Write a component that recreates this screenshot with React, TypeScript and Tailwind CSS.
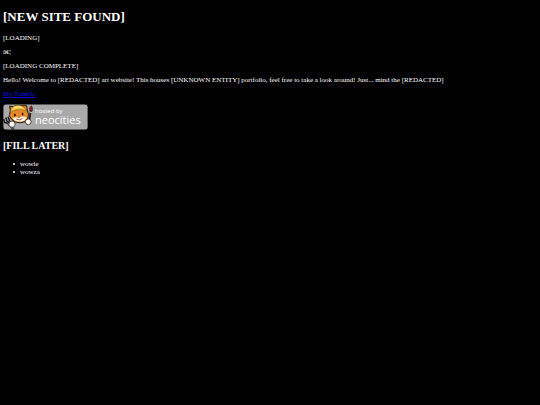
const log = ["[LOADING]", "â€¦", "[LOADING COMPLETE]"];
const items = ["wowie", "wowza"];

function NeocitiesBadge() {
  return (
    <svg viewBox="0 0 85 26" className="block h-[26px] w-[85px]" role="img" aria-label="hosted by neocities">
      <rect x="0.4" y="0.6" width="84.2" height="24.8" rx="2.5" fill="#a9a9a9" />
      {/* fork */}
      <path d="M4.6 18.6 L10.6 25.2" stroke="#1d1d1d" strokeWidth="2.4" />
      <path d="M0.6 15 L1.8 18.6 L4.8 19.2 L6.6 16.6 L5 12.6 M2.8 13.6 L4.8 19.2" stroke="#1d1d1d" strokeWidth="1.5" fill="none" />
      <path d="M4.6 18.6 L10.4 25" stroke="#8c8f94" strokeWidth="0.9" />
      {/* cat */}
      <path d="M7.4 6 L6.6 2.2 L10.4 2.6 Q15 0 19.6 1.6 L23.8 1.8 L24.2 6 L25.6 10.5 Q25.4 15.6 22 17.8 Q17 19.6 12.4 18 Q7.6 15.6 6.4 11.6Z" fill="#e8892b" stroke="#21160d" strokeWidth="1" />
      <path d="M7.4 8.6 Q7.6 2.2 14 1.2 Q20.6 0.8 23.6 7 Q18.6 4.8 13.6 5.8 Q10 6.6 7.4 8.6Z" fill="#f3c846" stroke="#6b4a12" strokeWidth="0.5" />
      <path d="M11 3.6 Q15 1.6 19 3.2" stroke="#fff0a6" strokeWidth="0.9" fill="none" />
      <path d="M9.6 14.4 Q11.6 12.8 15 13.4 Q19.4 11.6 23.8 13 Q22.6 17.4 17 17.8 Q12 17.6 9.6 14.4Z" fill="#fff3df" />
      <ellipse cx="11.8" cy="11" rx="0.9" ry="1.5" fill="#211210" />
      <ellipse cx="19.6" cy="10" rx="0.9" ry="1.5" fill="#211210" />
      <path d="M15 13 L16.8 12.8 L16 14Z" fill="#5a2018" />
      <path d="M13.4 15.2 Q16.6 17 19.4 14.4" stroke="#832f22" strokeWidth="0.8" fill="none" />
      {/* brush */}
      <path d="M27.8 6.8 L26.2 17" stroke="#2b1714" strokeWidth="1.8" />
      <path d="M26.8 6.8 Q26 3.6 28.4 1.8 Q30.2 4 29 7.2Z" fill="#a82328" stroke="#2b1010" strokeWidth="0.7" />
      <path d="M27 8.2 L29 8.4" stroke="#d8d8d8" strokeWidth="1" />
      <circle cx="9" cy="20.2" r="3.1" fill="#fff" stroke="#3b2616" strokeWidth="0.8" />
      <circle cx="25.2" cy="17.8" r="2.9" fill="#fff" stroke="#3b2616" strokeWidth="0.8" />
      <text x="32" y="9" fontSize="6" fill="#fff" fontFamily="'Open Sans', sans-serif">hosted by</text>
      <text x="32" y="20" fontSize="11" fontWeight="500" fill="#fff" fontFamily="'Open Sans', sans-serif">neocities</text>
    </svg>
  );
}

export default function App() {
  return (
    <div className="min-h-screen bg-black px-[3px] pt-[9px] pb-2 font-['Liberation_Serif',serif] text-[7px] leading-[8px] text-white">
      <h1 className="text-[13px] leading-4 font-bold">[NEW SITE FOUND]</h1>
      <div className="mt-[9px] flex flex-col items-start gap-[6px]">
        {log.map((line) => (
          <p key={line}>{line}</p>
        ))}
        <p>
          Hello! Welcome to [REDACTED] art website! This houses [UNKNOWN ENTITY] portfolio, feel free to take a look
          around! Just... mind the [REDACTED]
        </p>
        <a href="#tumblr" className="text-[#0000ee] underline">
          My Tumblr
        </a>
        <a href="#neocities">
          <NeocitiesBadge />
        </a>
      </div>
      <h2 className="mt-[10px] text-[10px] leading-3 font-bold">[FILL LATER]</h2>
      <ul className="mt-2 pl-[10px]">
        {items.map((item) => (
          <li key={item} className="flex items-center gap-[5px] before:size-[2px] before:rounded-full before:bg-white">
            {item}
          </li>
        ))}
      </ul>
    </div>
  );
}
